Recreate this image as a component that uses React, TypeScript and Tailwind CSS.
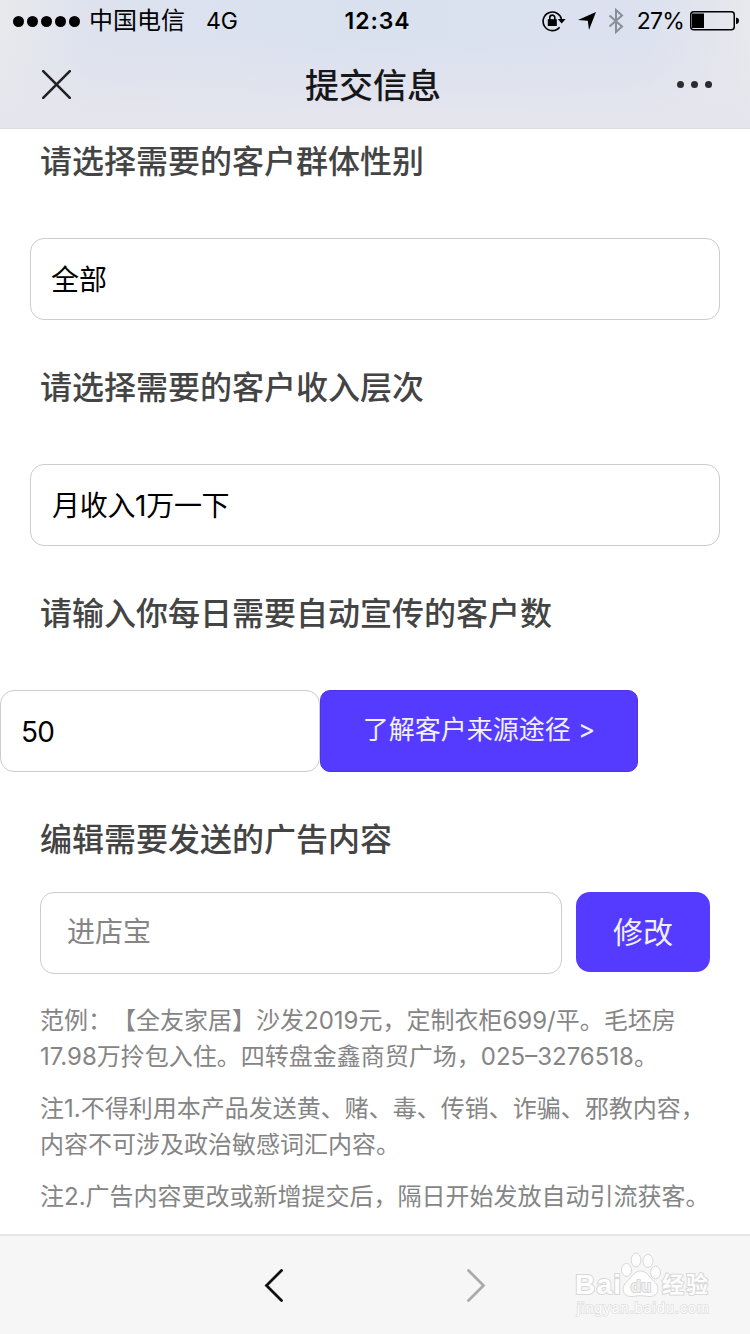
import type { ReactNode } from 'react';

function StatusBar() {
    return (
        <div className="grid h-10 grid-cols-[1fr_auto_1fr] items-center pr-[11px] pl-[13px] text-[24px] leading-[42px] text-black">
            <div className="flex items-center">
                <div className="flex gap-[3px]">
                    {[0, 1, 2, 3, 4].map((dot) => (
                        <span
                            key={dot}
                            className="size-[11px] rounded-full bg-black"
                        />
                    ))}
                </div>
                <span className="ml-[9px]">中国电信</span>
                <span className="ml-[21px] text-[23px]">4G</span>
            </div>

            <div className="pl-[3px] text-[23px] font-semibold tracking-[0.9px]">
                12:34
            </div>

            <div className="flex items-center justify-end">
                <svg width="24" height="22" viewBox="0 0 24 22" fill="none">
                    <path
                        d="M17.6 17.2A9.3 9.3 0 1 1 19.6 10"
                        stroke="#000"
                        strokeWidth="1.6"
                    />
                    <path d="M15.800 9h7.800l-3.900 4.600z" fill="#000" />
                    <rect
                        x="5.800"
                        y="9.200"
                        width="9"
                        height="6.800"
                        fill="#000"
                    />
                    <path
                        d="M7.8 10V7.6a2.5 2.5 0 0 1 5 0V10"
                        stroke="#000"
                        strokeWidth="1.6"
                    />
                </svg>
                <svg
                    className="ml-3"
                    width="18"
                    height="18"
                    viewBox="0 0 18 18"
                >
                    <path d="M18 0 11 18 9.8 8.800 0 8z" fill="#000" />
                </svg>
                <svg
                    className="ml-3"
                    width="16"
                    height="26"
                    viewBox="0 0 16 26"
                    fill="none"
                >
                    <path
                        d="M1.500 7.500 14 18.500 8 24V2L14 7.500 1.500 18.500"
                        stroke="#8a8e97"
                        strokeWidth="2"
                    />
                </svg>
                <span className="ml-[13px] text-[23px] tracking-[-0.8px]">
                    27%
                </span>
                <svg
                    className="ml-[6px]"
                    width="49"
                    height="20"
                    viewBox="0 0 49 20"
                >
                    <rect
                        x="0.75"
                        y="0.75"
                        width="43.5"
                        height="18"
                        rx="3"
                        fill="none"
                        stroke="#000"
                        strokeWidth="1.5"
                    />
                    <rect x="2" y="2.5" width="12" height="14.5" fill="#000" />
                    <path d="M46 6.5q3 .5 3 3.3t-3 3.3z" fill="#000" />
                </svg>
            </div>
        </div>
    );
}

function NavBar() {
    return (
        <div className="flex h-[88px] items-center justify-between pr-[38px] pl-[42px]">
            <svg width="29" height="29" viewBox="0 0 29 29" fill="none">
                <path
                    d="M1.2 1.2 27.8 27.8M27.8 1.2 1.2 27.8"
                    stroke="#222226"
                    strokeWidth="2.6"
                    strokeLinecap="round"
                />
            </svg>
            <h1 className="pt-[3px] pr-[2px] text-[34px] leading-[48px] font-medium text-[#17171a]">
                提交信息
            </h1>
            <div className="flex gap-[7px]">
                {[0, 1, 2].map((dot) => (
                    <span
                        key={dot}
                        className="size-[7px] rounded-full bg-[#2b2b30]"
                    />
                ))}
            </div>
        </div>
    );
}

function Label({ children }: { children: ReactNode }) {
    return (
        <h2 className="ml-10 h-16 text-[32px] leading-[66px] font-medium text-[#444]">
            {children}
        </h2>
    );
}

function Watermark() {
    return (
        <svg
            className="absolute top-[9px] left-[570px]"
            width="145"
            height="75"
            viewBox="0 0 145 75"
            fill="#fdfdfd"
            stroke="#d8d8d8"
        >
            <g
                className="font-['Liberation_Sans','Noto_Sans_CJK_SC',sans-serif] font-bold"
                strokeWidth="2"
                paintOrder="stroke"
            >
                <text x="5" y="49" fontSize="28" textLength="46">
                    Bai
                </text>
                <text x="92" y="47" fontSize="22" textLength="46">
                    经验
                </text>
            </g>
            <path d="M70.5 26c6.500 0 8.500 6 13.500 10.500 7 6 4 15-4 15-4 0-6-.8-9.500-.8s-5.500.8-9.500.8c-8 0-11-9-4-15C62 32 64 26 70.500 26z" />
            <ellipse cx="56.5" cy="25" rx="5" ry="6.5" />
            <ellipse cx="66" cy="15" rx="4.8" ry="7" />
            <ellipse cx="78" cy="16" rx="5" ry="6.5" />
            <ellipse cx="85.5" cy="27.500" rx="5" ry="6.3" />
            <text
                className="font-['Liberation_Sans',sans-serif] font-bold"
                x="60.500"
                y="46.500"
                fontSize="17"
                fill="#f0f0f0"
                stroke="#d0d0d0"
                strokeWidth="1.600"
                paintOrder="stroke"
            >
                du
            </text>
            <text
                className="font-['Liberation_Sans',sans-serif]"
                x="7"
                y="68"
                fontSize="14"
                textLength="132"
                stroke="#e0e0e0"
                strokeWidth="1.600"
                paintOrder="stroke"
            >
                jingyan.baidu.com
            </text>
        </svg>
    );
}

export default function App() {
    return (
        <div className="flex h-[1334px] w-[750px] flex-col overflow-hidden bg-white font-['Inter','Noto_Sans_CJK_SC',sans-serif]">
            <header className="h-[129px] shrink-0 border-b border-[#dcdce0] bg-[linear-gradient(to_bottom,transparent_30%,#e5e5ed_95%),linear-gradient(to_right,#e8e9ec,#dde2ee_12%,#d9e1ef_50%,#dbe1ef_85%,#e8e8ed)]">
                <StatusBar />
                <NavBar />
            </header>

            <main className="flex-1">
                <Label>请选择需要的客户群体性别</Label>
                <div className="mx-[30px] mt-[45px] h-[82px] rounded-[14px] border border-[#ccc] pl-[20px] text-[28px] leading-[83px] text-black">
                    全部
                </div>

                <div className="mt-[35px]">
                    <Label>请选择需要的客户收入层次</Label>
                </div>
                <div className="mx-[30px] mt-[45px] h-[82px] rounded-[14px] border border-[#ccc] pl-[21px] text-[28px] leading-[82px] tracking-[-0.3px] text-black">
                    月收入1万一下
                </div>

                <div className="mt-[35px]">
                    <Label>请输入你每日需要自动宣传的客户数</Label>
                </div>
                <div className="mt-[45px] flex">
                    <div className="h-[82px] w-[320px] rounded-[14px] border border-[#ccc] pl-[20px] text-[28px] leading-[82px] tracking-[-0.8px] text-black">
                        50
                    </div>
                    <button className="h-[82px] w-[318px] rounded-[10px] border border-[#4a35e0] bg-[#543bff] pb-[3px] text-[26px] text-[#f1effe]">
                        了解客户来源途径 &gt;
                    </button>
                </div>

                <div className="mt-[35px]">
                    <Label>编辑需要发送的广告内容</Label>
                </div>
                <div className="mx-10 mt-[21px] flex items-start gap-[14px]">
                    <div className="h-[82px] flex-1 rounded-[14px] border border-[#ccc] pl-[26px] text-[28px] leading-[79px] text-[#858585]">
                        进店宝
                    </div>
                    <button className="h-20 w-[134px] rounded-[14px] bg-[#543bff] text-[30px] text-[#f1effe]">
                        修改
                    </button>
                </div>

                <div className="mt-[29px] ml-10 space-y-4 text-[24px] leading-9 whitespace-nowrap text-[#858585] [text-spacing-trim:space-all]">
                    <p>
                        范例：【全友家居】沙发2019元，定制衣柜699/平。毛坯房
                        <br />
                        17.98万拎包入住。四转盘金鑫商贸广场，025–3276518。
                    </p>
                    <p>
                        注1.不得利用本产品发送黄、赌、毒、传销、诈骗、邪教内容，
                        <br />
                        内容不可涉及政治敏感词汇内容。
                    </p>
                    <p>注2.广告内容更改或新增提交后，隔日开始发放自动引流获客。</p>
                </div>
            </main>

            <footer className="relative h-[100px] shrink-0 border-t-2 border-[#e6e6e6] bg-[#f6f6f6]">
                <div className="flex h-full items-center justify-center gap-[182px]">
                    <svg width="20" height="35" viewBox="0 0 20 35" fill="none">
                        <path
                            d="M17.5 2.5 2.5 17.5l15 15"
                            stroke="#111"
                            strokeWidth="2.8"
                            strokeLinecap="round"
                        />
                    </svg>
                    <svg width="20" height="35" viewBox="0 0 20 35" fill="none">
                        <path
                            d="m2.5 2.5 15 15-15 15"
                            stroke="#aaa"
                            strokeWidth="2.8"
                            strokeLinecap="round"
                        />
                    </svg>
                </div>
                <Watermark />
            </footer>
        </div>
    );
}
